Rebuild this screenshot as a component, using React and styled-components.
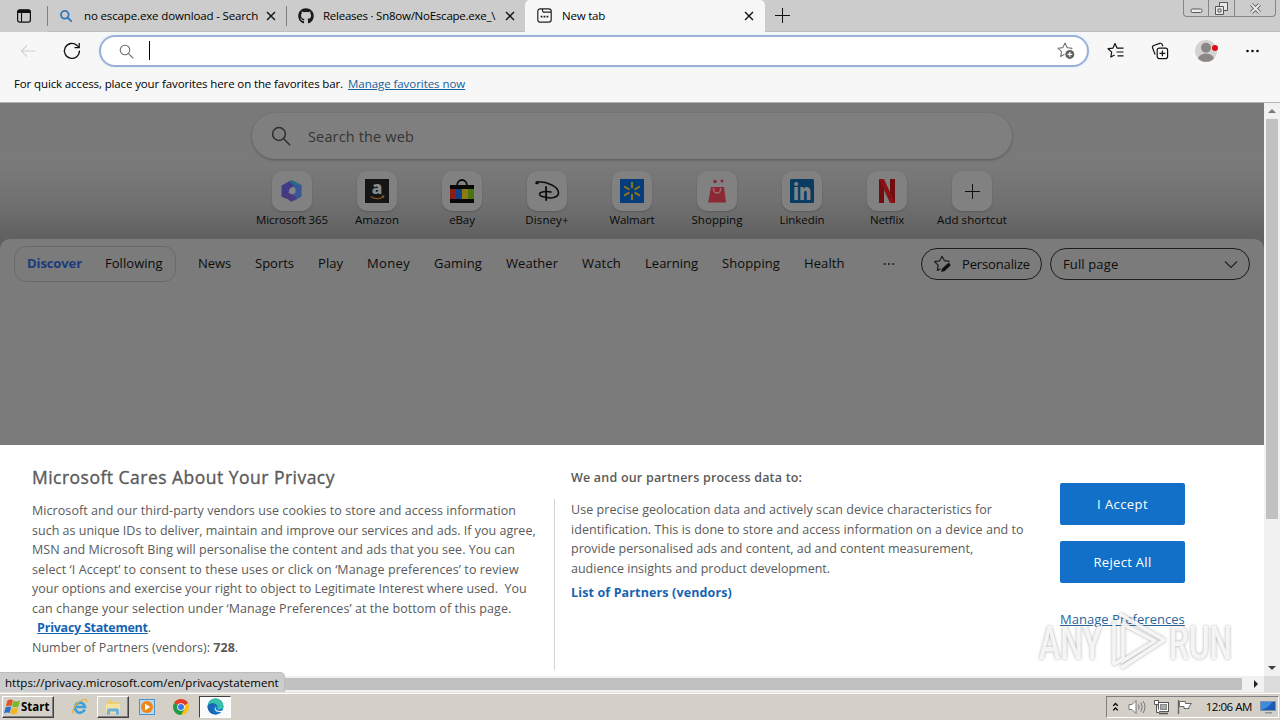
import React from "react";
import styled, { createGlobalStyle, css } from "styled-components";
import { FaGithub } from "react-icons/fa";

const GlobalStyle = createGlobalStyle`
  * {
    box-sizing: border-box;
  }

  body {
    margin: 0;
    overflow: hidden;
    font-family: "Open Sans", "Noto Sans", sans-serif;
    color: #000;
  }

  svg {
    display: block;
    flex: none;
    overflow: visible;
  }
`;

const Screen = styled.div`
  position: relative;
  width: 1280px;
  height: 720px;
  display: flex;
  flex-direction: column;
  overflow: hidden;
  background: #fff;
`;

const Text = styled.span`
  white-space: pre;
  font-size: ${(p) => p.$size || 11.5}px;
  font-weight: ${(p) => p.$weight || 400};
  letter-spacing: ${(p) => p.$track || 0}px;
`;

/* ---------- tab strip ---------- */

const TabStrip = styled.div`
  height: 32px;
  flex: none;
  display: flex;
  align-items: stretch;
  background: #ccc;
`;

const TabMenu = styled.div`
  width: 47px;
  display: flex;
  align-items: center;
  justify-content: center;
`;

const Tab = styled.div`
  width: ${(p) => p.$width}px;
  display: flex;
  align-items: center;
  padding: 0 9px 0 ${(p) => p.$left || 12}px;
  ${(p) =>
    p.$active
      ? css`
          background: #f7f7f7;
          border-radius: 5px 5px 0 0;
          padding-right: 10px;
          padding-bottom: 1px;
        `
      : css`
          border-bottom: 1px solid #bdbdbd;
        `}
`;

const TabTitle = styled(Text)`
  flex: 1;
  min-width: 0;
  overflow: hidden;
  margin-left: ${(p) => p.$left}px;
`;

const TabDivider = styled.div`
  width: 1px;
  height: 20px;
  margin-top: 6px;
  background: #808080;
`;

const NewTabButton = styled.div`
  width: 35px;
  display: flex;
  align-items: center;
  justify-content: center;
  border-bottom: 1px solid #bdbdbd;
`;

const StripRest = styled.div`
  flex: 1;
  display: flex;
  justify-content: flex-end;
  padding-right: 4px;
  border-bottom: 1px solid #bdbdbd;
`;

const WindowButtons = styled.div`
  display: flex;
  height: 17px;
  border: 1px solid #858585;
  border-top: 0;
  border-radius: 0 0 4px 4px;
`;

const WindowButton = styled.div`
  width: ${(p) => p.$width}px;
  display: flex;
  align-items: center;
  justify-content: center;

  & + & {
    border-left: 1px solid #858585;
  }
`;

/* ---------- toolbar ---------- */

const Toolbar = styled.div`
  height: 38px;
  flex: none;
  display: flex;
  align-items: center;
  padding-left: 6px;
  background: #f7f7f7;
`;

const ToolSlot = styled.div`
  width: ${(p) => p.$width || 44}px;
  display: flex;
  justify-content: center;
`;

const AddressBar = styled.div`
  width: 990px;
  height: 32px;
  margin: 0 5px;
  padding: 0 12px 0 18px;
  display: flex;
  align-items: center;
  background: #fff;
  border: 2px solid #9ab0d6;
  border-radius: 16px;
  box-shadow: 0 0 2px 1px #e4f2fb;
`;

const Caret = styled.div`
  width: 1px;
  height: 19px;
  margin: 0 auto 2px 15px;
  background: #000;
`;

const FavoritesBar = styled.div`
  height: 33px;
  flex: none;
  display: flex;
  align-items: center;
  gap: 5px;
  padding: 0 14px 6px;
  background: #f7f7f7;
  border-bottom: 1px solid #b5b5b5;
`;

const BarLink = styled(Text)`
  color: #15619c;
  text-decoration: underline;
`;

/* ---------- page ---------- */

const Viewport = styled.div`
  flex: 1;
  min-height: 0;
  display: flex;
`;

const Page = styled.div`
  width: 1264px;
  display: flex;
  flex-direction: column;
  background: #616161;
`;

const Hero = styled.div`
  height: 136px;
  padding-top: 10px;
  display: flex;
  flex-direction: column;
  align-items: center;
  background: linear-gradient(#797979 0, #7a7a7a 45%, #707070 74%, #606060 100%);
`;

const WebSearch = styled.div`
  width: 760px;
  height: 46px;
  display: flex;
  align-items: center;
  gap: 17px;
  padding-left: 19px;
  border-radius: 23px;
  background: #7f7f7f;
  box-shadow: 0 1px 3px rgba(0, 0, 0, 0.28);
  color: #343434;
`;

const Shortcuts = styled.div`
  display: flex;
  margin-top: 12px;
`;

const Shortcut = styled.div`
  width: 85px;
  display: flex;
  flex-direction: column;
  align-items: center;
  line-height: 17px;
  color: #080808;
`;

const Tile = styled.div`
  width: 40px;
  height: 40px;
  display: flex;
  align-items: center;
  justify-content: center;
  border-radius: 10px;
  background: #818181;
  box-shadow: 0 1px 2px rgba(0, 0, 0, 0.18);
`;

const Feed = styled.div`
  flex: 1;
  padding: 7px 14px 0;
  border-radius: 10px 10px 0 0;
  background: #7b7b7b;
`;

const FeedNav = styled.div`
  display: flex;
  align-items: center;
  height: 36px;
  color: #0c0c0c;
`;

const FeedSwitch = styled.div`
  width: 162px;
  height: 36px;
  display: flex;
  align-items: center;
  gap: 23px;
  padding: 0 0 2px 12px;
  border: 1px solid #696969;
  border-radius: 12px;
`;

const Current = styled(Text)`
  color: #1a3a7c;
`;

const Topics = styled.div`
  display: flex;
  gap: 24px;
  margin-left: 22px;
  padding-bottom: 2px;
`;

const MoreTopics = styled.div`
  margin-left: auto;
  margin-right: 26px;
`;

const PillButton = styled.div`
  width: ${(p) => p.$width}px;
  height: 32px;
  display: flex;
  align-items: center;
  justify-content: space-between;
  padding: 0 11px 0 ${(p) => p.$left || 12}px;
  border: 1px solid #1c1c1c;
  border-radius: 16px;

  & + & {
    margin-left: 8px;
  }
`;

/* ---------- consent banner ---------- */

const Banner = styled.div`
  height: 231px;
  flex: none;
  display: flex;
  background: #fff;
  color: #5a5a5a;
`;

const Notice = styled.div`
  width: 554px;
  padding: 19px 0 0 32px;
`;

const NoticeTitle = styled(Text)`
  display: block;
  line-height: 26px;
  margin-bottom: 11px;
  -webkit-text-stroke: 0.35px currentColor;
`;

const Line = styled(Text)`
  display: block;
  line-height: 19.5px;
`;

const StrongLink = styled(Text)`
  margin-left: ${(p) => p.$left || 0}px;
  color: #1464b4;
  text-decoration: ${(p) => (p.$plain ? "none" : "underline")};
`;

const Purposes = styled.div`
  width: 488px;
  margin-top: 54px;
  padding-left: 16px;
  border-left: 1px solid #d4d4d4;
  height: 171px;
`;

const PurposeBlock = styled.div`
  margin-top: -32px;
`;

const PurposeTitle = styled(Text)`
  display: block;
  line-height: 21px;
  margin-bottom: 12px;
`;

const PartnerList = styled.div`
  margin-top: 3px;
  line-height: 20px;
`;

const Actions = styled.div`
  width: 125px;
  margin: 38px 0 0 18px;
  display: flex;
  flex-direction: column;
  gap: 16px;
`;

const ActionButton = styled.div`
  height: 42px;
  display: flex;
  align-items: center;
  justify-content: center;
  border-radius: 2px;
  background: #1270c8;
  color: #fff;
`;

const ManageLink = styled(Text)`
  margin-top: 10px;
  line-height: 20px;
  color: #2a649c;
  text-decoration: underline;
`;

/* ---------- scrollbars ---------- */

const VScroll = styled.div`
  width: 16px;
  display: flex;
  flex-direction: column;
  align-items: center;
  justify-content: space-between;
  background: #f1f1f1;
`;

const VThumb = styled.div`
  width: 12px;
  height: 400px;
  margin-bottom: auto;
  background: #c1c1c1;
`;

const ArrowBox = styled.div`
  width: 16px;
  height: 16px;
  display: flex;
  align-items: center;
  justify-content: center;
`;

const HScroll = styled.div`
  height: 16px;
  flex: none;
  display: flex;
  align-items: center;
  background: #f1f1f1;
`;

const HThumb = styled.div`
  width: 1226px;
  height: 12px;
  margin: 0 6px 0 16px;
  background: #c1c1c1;
`;

const ScrollCorner = styled.div`
  width: 16px;
  height: 16px;
  background: #dcdcdc;
`;

/* ---------- taskbar ---------- */

const Taskbar = styled.div`
  height: 28px;
  flex: none;
  display: flex;
  align-items: center;
  padding: 1px 1px 1px 2px;
  background: #d4d0c8;
  border-top: 1px solid #e6e3dc;
  box-shadow: inset 0 1px 0 #fff;
`;

const StartButton = styled.div`
  width: 52px;
  height: 22px;
  display: flex;
  align-items: center;
  padding-left: 1px;
  border: 1px solid;
  border-color: #fff #404040 #404040 #fff;
  box-shadow: inset -1px -1px 0 #808080;
`;

const TaskButton = styled.div`
  width: 32px;
  height: 22px;
  margin-left: ${(p) => p.$left || 0}px;
  display: flex;
  align-items: center;
  justify-content: center;
  ${(p) =>
    p.$state === "raised" &&
    css`
      border: 1px solid;
      border-color: #fff #404040 #404040 #fff;
      box-shadow: inset -1px -1px 0 #808080;
    `}
  ${(p) =>
    p.$state === "pressed" &&
    css`
      border: 1px solid;
      border-color: #404040 #fff #fff #404040;
      background: #fbfafa;
    `}
`;

const Tray = styled.div`
  width: 173px;
  height: 22px;
  margin-left: auto;
  display: flex;
  align-items: center;
  padding: 0 2px 0 5px;
  border: 1px solid;
  border-color: #808080 #fff #fff #808080;
`;

const TrayIcon = styled.div`
  margin-left: ${(p) => p.$left || 0}px;
`;

const Clock = styled(Text)`
  margin-left: auto;
  margin-right: 8px;
`;

/* ---------- overlays ---------- */

const StatusBubble = styled.div`
  position: absolute;
  left: 0;
  top: 672px;
  width: 285px;
  height: 20px;
  padding-left: 5px;
  line-height: 16px;
  background: #ccc;
  border: 1px solid #bcbcbc;
  border-left: 0;
  border-bottom: 0;
  border-top-right-radius: 5px;
`;

const Watermark = styled.svg`
  position: absolute;
  left: 1030px;
  top: 602px;
  filter: drop-shadow(0 0 1.5px rgba(90, 90, 90, 0.6));
`;

/* ---------- small icons ---------- */

const CloseIcon = () => (
  <svg width="12" height="12" viewBox="0 0 12 12" stroke="#111" strokeWidth="1.4">
    <path d="M2 2l8 8M10 2l-8 8" />
  </svg>
);

const Magnifier = ({ size, color, width }) => (
  <svg
    width={size}
    height={size}
    viewBox="0 0 20 20"
    fill="none"
    stroke={color}
    strokeWidth={width}
    strokeLinecap="round"
  >
    <circle cx="8" cy="8" r="6.4" />
    <path d="M12.7 12.7l6 6" />
  </svg>
);

const TabMenuIcon = () => (
  <svg width="16" height="16" viewBox="0 0 16 16">
    <rect x="1.6" y="1.9" width="12.8" height="12.2" rx="2" fill="none" stroke="#111" strokeWidth="1.2" />
    <path d="M1.6 5V3.6a2 2 0 0 1 2-1.8h8.8a2 2 0 0 1 2 1.8V5z" fill="#111" />
    <path d="M5.5 5v9" stroke="#111" strokeWidth="1.1" />
  </svg>
);

const NewTabIcon = () => (
  <svg width="15" height="15" viewBox="0 0 15 15" fill="none" stroke="#222" strokeWidth="1.2">
    <rect x="0.8" y="0.8" width="13.4" height="13.4" rx="2.4" />
    <path d="M5.5 1v1.6a1.6 1.6 0 0 0 1.6 1.6H14" />
    <path d="M3.7 8.6h1.8M6.6 8.6h1.8M9.5 8.6h1.8" strokeWidth="1.8" />
  </svg>
);

const BackIcon = () => (
  <svg width="16" height="14" viewBox="0 0 18 16" fill="none" stroke="#cfcfcf" strokeWidth="1.2">
    <path d="M17.5 8h-16M8 1.5L1.5 8 8 14.5" />
  </svg>
);

const RefreshIcon = () => (
  <svg width="18" height="18" viewBox="0 0 18 18" fill="none" stroke="#111" strokeWidth="1.3">
    <path d="M16.4 8.6A7.5 7.5 0 1 1 14 3.4L16 5.4" />
    <path d="M16.2 1v4.7h-4.7" />
  </svg>
);

const STAR = "M8 1l2.1 4.6 5 .6-3.7 3.4 1 4.9L8 12.1l-4.4 2.4 1-4.9L.9 6.2l5-.6z";

const StarAddIcon = () => (
  <svg width="18" height="18" viewBox="0 0 18 18">
    <path d={STAR} fill="none" stroke="#777" strokeWidth="1.1" strokeLinejoin="round" />
    <circle cx="12.8" cy="12.4" r="5.4" fill="#fff" />
    <circle cx="12.8" cy="12.4" r="4.5" fill="#606060" />
    <path d="M10.4 12.4h4.8M12.8 10v4.8" stroke="#fff" strokeWidth="1.2" />
  </svg>
);

const FavoritesIcon = () => (
  <svg width="18" height="18" viewBox="0 0 18 18" fill="none" stroke="#111" strokeWidth="1.2">
    <path d="M11 6.1H10L8 1.6 6 6.1l-4.9.6 3.6 3.4-.9 4.9L7.6 13" strokeLinejoin="round" />
    <path d="M11 6.2h5.5M9.5 10h7M10.5 13.8h6" />
  </svg>
);

const CollectionsIcon = () => (
  <svg width="18" height="18" viewBox="0 0 18 18" fill="none" stroke="#111" strokeWidth="1.2">
    <rect x="6.2" y="6.2" width="10.4" height="10.4" rx="2" />
    <path d="M8.5 11.4h5.8M11.4 8.5v5.8" />
    <path d="M4.2 12.6L1.6 6a2 2 0 0 1 1.2-2.5l6-2.1a2 2 0 0 1 2.5 1.2l.6 1.6" />
  </svg>
);

const AvatarIcon = () => (
  <svg width="24" height="24" viewBox="0 0 24 24">
    <circle cx="12" cy="12" r="11" fill="#d3d3d1" />
    <circle cx="12" cy="8.8" r="5" fill="#8b8785" />
    <path d="M4 19.4c1.4-3.4 4.4-4.8 8-4.8s6.6 1.4 8 4.8a11 11 0 0 1-16 0z" fill="#8b8785" />
    <circle cx="21" cy="9" r="3" fill="#e00b1c" />
  </svg>
);

const DotsIcon = ({ width, color }) => (
  <svg width={width} height="4" viewBox="0 0 14 4" fill={color}>
    <circle cx="2" cy="2" r="1.3" />
    <circle cx="7" cy="2" r="1.3" />
    <circle cx="12" cy="2" r="1.3" />
  </svg>
);

const ArrowIcon = ({ turn = 0, color = "#404040" }) => (
  <svg width="8" height="8" viewBox="0 0 8 8">
    <path d="M0 6l4-4 4 4z" fill={color} transform={`rotate(${turn} 4 4)`} />
  </svg>
);

const PersonalizeIcon = () => (
  <svg width="18" height="18" viewBox="0 0 18 18">
    <path
      d="M15.5 7l.6-.7-4.6-.6L9 1.3 6.7 5.8l-5.2.8 3.7 3.6-.9 5.2 3.2-1.7"
      fill="none"
      stroke="#1e1e1e"
      strokeWidth="1.2"
      strokeLinejoin="round"
    />
    <path d="M8 16.8l1-3 5.6-5.2a1.7 1.7 0 0 1 2.4 2.4l-5.6 5.2z" fill="#111" />
  </svg>
);

/* ---------- shortcut logos ---------- */

const Microsoft365Logo = () => (
  <svg width="24" height="24" viewBox="0 0 24 24">
    <path d="M8 2.5L12 1l9.5 5v5L15 8 9 4z" fill="#2b6a86" />
    <path d="M9 2.5l-7.500 4v11l5 2.5 3-9.500 5-4z" fill="#413a88" />
    <path d="M21.5 6v11.5L14 22l-.5-6 2-6-3-3.5z" fill="#3a5896" />
    <path d="M1.500 15.500l5-1.500h5l5 5-5 4z" fill="#4c387c" />
    <path d="M9.8 9.5L13 8l2.500 2v3.500L12 15.500l-3.200-1.700z" fill="#858585" />
  </svg>
);

const AmazonLogo = () => (
  <svg width="24" height="24" viewBox="0 0 24 24">
    <rect width="24" height="24" fill="#151515" />
    <text x="12" y="15" textAnchor="middle" fontFamily="Open Sans" fontWeight="800" fontSize="17" fill="#8a8a8a">
      a
    </text>
    <path d="M5.5 17.5c4 2.6 9 2.6 12.5.4M16.5 16.8l2.3.2-.8 2" fill="none" stroke="#80551b" strokeWidth="1.2" />
  </svg>
);

const EbayLogo = () => (
  <svg width="24" height="24" viewBox="0 0 24 24">
    <path d="M7 7c0-8 10-8 10 0" fill="none" stroke="#080808" strokeWidth="1.8" />
    <rect y="6" width="24" height="18" fill="#080808" />
    <path d="M0 10h6v10H0z" fill="#8a1e16" />
    <path d="M6 10h6v10H6z" fill="#123f87" />
    <path d="M12 10h6v10h-6z" fill="#8d7a10" />
    <path d="M18 10h6v10h-6z" fill="#4b7410" />
  </svg>
);

const DisneyLogo = () => (
  <svg width="26" height="24" viewBox="0 0 26 24" fill="none" stroke="#0c0c0c" strokeWidth="1.6" strokeLinecap="round">
    <path d="M4 4.500C1 4.500 1.500 2.800 4.500 2.800c9 0 20 4.700 20 11 0 4.400-6.500 6.200-12.300 4.400" />
    <path d="M12 8l.2 13" strokeWidth="1.8" />
    <path d="M17 13c-4.500-1-11.500-.4-11.500 2.100 0 1.700 3 2.900 6.500 3.100" />
  </svg>
);

const WalmartLogo = () => (
  <svg width="24" height="24" viewBox="0 0 24 24">
    <rect width="24" height="24" fill="#053c7c" />
    <g stroke="#8b7318" strokeWidth="2.1" strokeLinecap="round">
      {[0, 60, 120, 180, 240, 300].map((a) => (
        <path key={a} d="M12 3.8v4.4" transform={`rotate(${a} 12 12)`} />
      ))}
    </g>
  </svg>
);

const ShoppingLogo = () => (
  <svg width="20" height="24" viewBox="0 0 20 24">
    <path d="M4 8h13l2 15.500H1.200z" fill="#8c2834" />
    <path d="M6.500 9v1.500a3.500 3.500 0 0 0 7 0V9" fill="none" stroke="#9a7478" strokeWidth="1.3" />
    <circle cx="8" cy="2.5" r="1.8" fill="#8c2834" />
    <circle cx="15" cy="2" r="1.5" fill="#8c2834" />
  </svg>
);

const LinkedinLogo = () => (
  <svg width="24" height="24" viewBox="0 0 24 24">
    <rect width="24" height="24" rx="1.5" fill="#0a3c62" />
    <text
      x="3"
      y="20.5"
      textLength="18.5"
      lengthAdjust="spacingAndGlyphs"
      fontFamily="Open Sans"
      fontWeight="800"
      fontSize="22"
      fill="#838383"
    >
      in
    </text>
  </svg>
);

const NetflixLogo = () => (
  <svg width="18" height="24" viewBox="0 0 18 24">
    <path d="M1 0h5v24H1zM12 0h5v24h-5z" fill="#6f0d10" />
    <path d="M1 0h5l11 24h-5z" fill="#8a1216" />
  </svg>
);

const PlusIcon = () => (
  <svg width="15" height="15" viewBox="0 0 15 15" stroke="#111" strokeWidth="1">
    <path d="M7.5 0v15M0 7.5h15" />
  </svg>
);

/* ---------- taskbar icons ---------- */

const WindowsFlag = () => (
  <svg width="17" height="16" viewBox="0 0 17 16">
    <path d="M3.5 1.5c2-1.400 4-1.200 5.400-.3L7.500 7.200C6 6.300 4 6.200 1.800 7.400z" fill="#e2541f" />
    <path d="M9.5 1.7c1.800 1 4 1 6.500-.2l-1.600 6c-2 1.200-4.500 1-6.300.1z" fill="#7cb629" />
    <path d="M1.5 8.4c2-1.300 4.300-1.100 5.700-.3l-1.500 6c-1.500-.9-3.500-1-5.700.3z" fill="#2d72c8" />
    <path d="M7.8 8.6c1.800 1 4 1 6.400-.1l-1.600 6c-2.100 1.200-4.500 1-6.300 0z" fill="#f2b51c" />
  </svg>
);

const ExplorerEIcon = () => (
  <svg width="18" height="18" viewBox="0 0 18 18" fill="none">
    <path d="M13.7 11.5A5 5 0 1 1 14 9H5.5" stroke="#3d9fdc" strokeWidth="2.6" />
    <path d="M2.6 15.8C-.5 13 6 4 12 1.8c3-1.1 4.400 0 3.600 2.600" stroke="#e5b533" strokeWidth="1.2" />
  </svg>
);

const FolderIcon = () => (
  <svg width="18" height="18" viewBox="0 0 18 18">
    <path d="M3 2h5l1 2h6v9H3z" fill="#e9cf72" />
    <path d="M2 6h14v9H2z" fill="#f4e3a0" />
    <path d="M3 16.5v-4a2 2 0 0 1 2-2h8a2 2 0 0 1 2 2v4h-3v-3H6v3z" fill="#6ab2dc" />
  </svg>
);

const MediaIcon = () => (
  <svg width="16" height="16" viewBox="0 0 16 16">
    <rect x="0.5" y="0.5" width="15" height="15" fill="#b9d9f0" stroke="#4d93c9" />
    <circle cx="8" cy="8" r="6" fill="#f08518" />
    <path d="M6 4.8v6.4L11.3 8z" fill="#fff" />
  </svg>
);

const ChromeIcon = () => (
  <svg width="16" height="16" viewBox="0 0 16 16">
    <circle cx="8" cy="8" r="8" fill="#fbc116" />
    <path d="M8 8L1.1 4A8 8 0 0 1 14.9 4z" fill="#e33b2e" />
    <path d="M8 8L1.1 4A8 8 0 0 0 8 16l3.500-6z" fill="#229a4b" />
    <path d="M8 4h6.9L8 8z" fill="#e33b2e" />
    <circle cx="8" cy="8" r="3.8" fill="#fff" />
    <circle cx="8" cy="8" r="3" fill="#3b78e7" />
  </svg>
);

const EdgeIcon = () => (
  <svg width="17" height="17" viewBox="0 0 17 17">
    <circle cx="8.5" cy="8.5" r="8" fill="#1577c9" />
    <path d="M.6 7.5A8 8 0 0 1 16.5 8c0 2.500-2 3.500-4.500 3.500-2 0-2-1-1.500-2C11.500 6 4 3.500.6 7.500z" fill="#36c2a8" />
    <path d="M.5 8.5C2 4 9 4.500 10.500 8 9 7 6.500 7.500 6 10c-.5 3 2 5.500 5 6A8 8 0 0 1 .5 8.500z" fill="#1b65b5" />
    <path d="M9 8.5c-1.300 1.500 0 4.500 3.500 4.500 1.500 0 2.500-.4 3.500-1 0-.3.400-1 .8-1.500l.2 4-4.500-.5C8 14 6.500 10.500 9 8.500z" fill="#fbfafa" />
  </svg>
);

const ChevronsIcon = () => (
  <svg width="7" height="10" viewBox="0 0 7 10" fill="none" stroke="#000" strokeWidth="1.3">
    <path d="M1.2 3.9l2.3-2.4 2.3 2.4M1.2 8.4L3.500 6l2.300 2.400" />
  </svg>
);

const SpeakerIcon = () => (
  <svg width="18" height="16" viewBox="0 0 18 16" fill="none" stroke="#777" strokeWidth="1">
    <path d="M1 5.5h3l4-4v13l-4-4H1z" fill="#fff" />
    <path d="M10.5 5.5q1.500 2.500 0 5M12.800 3.500q3 4.500 0 9M15 2q4 6 0 12" />
  </svg>
);

const NetworkIcon = () => (
  <svg width="17" height="16" viewBox="0 0 17 16" fill="#fff" stroke="#555">
    <rect x="5.5" y="3.5" width="10" height="9" />
    <rect x="7.5" y="5.5" width="6" height="5" fill="#a9a9a9" stroke="#888" />
    <path d="M6 14.5h9" strokeWidth="1.6" />
    <path d="M1.5 1.5h4v4h-4zM3.5 5.5v8h3" />
  </svg>
);

const FlagIcon = () => (
  <svg width="16" height="16" viewBox="0 0 16 16" fill="#fff" stroke="#666">
    <path d="M1.5 1v14" strokeWidth="1.4" />
    <path d="M2.5 2.5h6v2h6l-2.5 3v2H7v-2H2.5z" />
  </svg>
);

const DesktopIcon = () => (
  <svg width="16" height="14" viewBox="0 0 16 14">
    <path d="M.5 1.5h15v9H.5z" fill="#1b5bb5" stroke="#7d93ab" />
    <path d="M1 10c4-1 9-4 11-8H1z" fill="#3f8be0" />
    <path d="M5 12h7v1.5H5z" fill="#8796a6" />
  </svg>
);

const SHORTCUTS = [
  { name: "Microsoft 365", track: -0.11, Logo: Microsoft365Logo },
  { name: "Amazon", track: 0.08, Logo: AmazonLogo },
  { name: "eBay", track: -0.1, Logo: EbayLogo },
  { name: "Disney+", track: 0.1, Logo: DisneyLogo },
  { name: "Walmart", track: -0.1, Logo: WalmartLogo },
  { name: "Shopping", track: 0.06, Logo: ShoppingLogo },
  { name: "Linkedin", track: -0.05, Logo: LinkedinLogo },
  { name: "Netflix", track: -0.1, Logo: NetflixLogo },
  { name: "Add shortcut", track: 0.05, Logo: PlusIcon },
];

const TOPICS = [
  { name: "News", track: -0.09 },
  { name: "Sports", track: 0 },
  { name: "Play", track: 0.04 },
  { name: "Money", track: 0.337 },
  { name: "Gaming", track: 0.16 },
  { name: "Weather", track: 0.036 },
  { name: "Watch", track: 0.188 },
  { name: "Learning", track: 0.01 },
  { name: "Shopping", track: 0.105 },
  { name: "Health", track: 0.1 },
];

const NOTICE = [
  ["Microsoft and our third-party vendors use cookies to store and access information", 0.068],
  ["such as unique IDs to deliver, maintain and improve our services and ads. If you agree,", 0.008],
  ["MSN and Microsoft Bing will personalise the content and ads that you see. You can", 0.036],
  ["select ‘I Accept’ to consent to these uses or click on ‘Manage preferences’ to review", 0.1],
  ["your options and exercise your right to object to Legitimate Interest where used.  You", -0.016],
  ["can change your selection under ‘Manage Preferences’ at the bottom of this page.", 0.066],
];

const PURPOSES = [
  ["Use precise geolocation data and actively scan device characteristics for", 0.058],
  ["identification. This is done to store and access information on a device and to", 0.048],
  ["provide personalised ads and content, ad and content measurement,", -0.01],
  ["audience insights and product development.", -0.01],
];

const BrowserTabs = () => (
  <TabStrip>
    <TabMenu>
      <TabMenuIcon />
    </TabMenu>
    <TabDivider />
    <Tab $width={238}>
      <Magnifier size={12} color="#2f76b8" width={3} />
      <TabTitle $left={12} $track={-0.14}>
        no escape.exe download - Search
      </TabTitle>
      <CloseIcon />
    </Tab>
    <TabDivider />
    <Tab $width={238} $left={10.5}>
      <FaGithub size={16} color="#1b1b1b" />
      <TabTitle $left={9.5} $track={-0.24}>
        Releases · Sn8ow/NoEscape.exe_\
      </TabTitle>
      <CloseIcon />
    </Tab>
    <Tab $width={240} $active>
      <NewTabIcon />
      <TabTitle $left={10} $track={-0.2}>
        New tab
      </TabTitle>
      <CloseIcon />
    </Tab>
    <NewTabButton>
      <PlusIcon />
    </NewTabButton>
    <StripRest>
      <WindowButtons>
        <WindowButton $width={24}>
          <svg width="13" height="17" viewBox="0 0 13 17">
            <rect x="1" y="9" width="11" height="3.5" rx="1.5" fill="#eee" stroke="#555" />
          </svg>
        </WindowButton>
        <WindowButton $width={26}>
          <svg width="13" height="13" viewBox="0 0 13 13" fill="#e8e8e8" stroke="#555">
            <path d="M4.5.5h8v8h-8z" />
            <path d="M.5 4.5h8v8h-8z" />
            <path d="M3 7h3v3H3z" />
          </svg>
        </WindowButton>
        <WindowButton $width={41}>
          <svg width="13" height="11" viewBox="0 0 13 11">
            <path d="M2.5 1.5l8 8M10.5 1.5l-8 8" stroke="#555" strokeWidth="3.8" />
            <path d="M2.5 1.5l8 8M10.5 1.5l-8 8" stroke="#eee" strokeWidth="1.9" />
          </svg>
        </WindowButton>
      </WindowButtons>
    </StripRest>
  </TabStrip>
);

const ConsentBanner = () => (
  <Banner>
    <Notice>
      <NoticeTitle $size={17.5} $track={0.48}>
        Microsoft Cares About Your Privacy
      </NoticeTitle>
      {NOTICE.map(([line, track]) => (
        <Line key={line} $size={12.5} $track={track}>
          {line}
        </Line>
      ))}
      <Line $size={12.5} $track={-0.163}>
        {" "}
        <StrongLink $left={2} $size={12.5} $weight={700} $track={-0.24}>
          Privacy Statement
        </StrongLink>
        .
      </Line>
      <Line $size={12.5} $track={0.02}>
        {"Number of Partners (vendors): "}
        <b>728</b>.
      </Line>
    </Notice>
    <Purposes>
      <PurposeBlock>
        <PurposeTitle $size={12.5} $weight={600} $track={0.2}>
          We and our partners process data to:
        </PurposeTitle>
        {PURPOSES.map(([line, track]) => (
          <Line key={line} $size={12.5} $track={track}>
            {line}
          </Line>
        ))}
        <PartnerList>
          <StrongLink $plain $size={12.5} $weight={700} $track={0.13}>
            List of Partners (vendors)
          </StrongLink>
        </PartnerList>
      </PurposeBlock>
    </Purposes>
    <Actions>
      <ActionButton>
        <Text $size={13} $track={0.42}>
          I Accept
        </Text>
      </ActionButton>
      <ActionButton>
        <Text $size={13} $track={0.3}>
          Reject All
        </Text>
      </ActionButton>
      <ManageLink $size={13} $track={0.03}>
        Manage Preferences
      </ManageLink>
    </Actions>
  </Banner>
);

const WindowsTaskbar = () => (
  <Taskbar>
    <StartButton>
      <WindowsFlag />
      <Text $size={11.5} $weight={700}>
        Start
      </Text>
    </StartButton>
    <TaskButton $left={10}>
      <ExplorerEIcon />
    </TaskButton>
    <TaskButton $left={1} $state="raised">
      <FolderIcon />
    </TaskButton>
    <TaskButton $left={2}>
      <MediaIcon />
    </TaskButton>
    <TaskButton $left={2}>
      <ChromeIcon />
    </TaskButton>
    <TaskButton $left={2} $state="pressed">
      <EdgeIcon />
    </TaskButton>
    <Tray>
      <ChevronsIcon />
      <TrayIcon $left={9}>
        <SpeakerIcon />
      </TrayIcon>
      <TrayIcon $left={7}>
        <NetworkIcon />
      </TrayIcon>
      <TrayIcon $left={7}>
        <FlagIcon />
      </TrayIcon>
      <Clock $track={-0.45}>12:06 AM</Clock>
      <DesktopIcon />
    </Tray>
  </Taskbar>
);

const App = () => (
  <Screen>
    <GlobalStyle />
    <BrowserTabs />
    <Toolbar>
      <ToolSlot>
        <BackIcon />
      </ToolSlot>
      <ToolSlot>
        <RefreshIcon />
      </ToolSlot>
      <AddressBar>
        <Magnifier size={15} color="#6b6b6b" width={1.4} />
        <Caret />
        <StarAddIcon />
      </AddressBar>
      <ToolSlot>
        <FavoritesIcon />
      </ToolSlot>
      <ToolSlot>
        <CollectionsIcon />
      </ToolSlot>
      <ToolSlot $width={48}>
        <AvatarIcon />
      </ToolSlot>
      <ToolSlot>
        <DotsIcon width={15} color="#111" />
      </ToolSlot>
    </Toolbar>
    <FavoritesBar>
      <Text $track={-0.123}>
        For quick access, place your favorites here on the favorites bar.
      </Text>
      <BarLink $track={-0.06}>Manage favorites now</BarLink>
    </FavoritesBar>
    <Viewport>
      <Page>
        <Hero>
          <WebSearch>
            <Magnifier size={20} color="#2e2e2e" width={1.5} />
            <Text $size={14.5} $track={0.15}>
              Search the web
            </Text>
          </WebSearch>
          <Shortcuts>
            {SHORTCUTS.map(({ name, track, Logo }) => (
              <Shortcut key={name}>
                <Tile>
                  <Logo />
                </Tile>
                <Text $track={track}>{name}</Text>
              </Shortcut>
            ))}
          </Shortcuts>
        </Hero>
        <Feed>
          <FeedNav>
            <FeedSwitch>
              <Current $size={13} $weight={700} $track={-0.1}>
                Discover
              </Current>
              <Text $size={13} $track={0.05}>
                Following
              </Text>
            </FeedSwitch>
            <Topics>
              {TOPICS.map(({ name, track }) => (
                <Text key={name} $size={13} $track={track}>
                  {name}
                </Text>
              ))}
            </Topics>
            <MoreTopics>
              <DotsIcon width={12} color="#222" />
            </MoreTopics>
            <PillButton $width={121} $left={11}>
              <PersonalizeIcon />
              <Text $size={13} $track={-0.15}>
                Personalize
              </Text>
            </PillButton>
            <PillButton $width={200}>
              <Text $size={13} $track={0.13}>
                Full page
              </Text>
              <svg width="14" height="9" viewBox="0 0 14 9" fill="none" stroke="#222" strokeWidth="1.2">
                <path d="M1 1.5l6 6 6-6" />
              </svg>
            </PillButton>
          </FeedNav>
        </Feed>
        <ConsentBanner />
      </Page>
      <VScroll>
        <ArrowBox>
          <ArrowIcon color="#7a7a7a" />
        </ArrowBox>
        <VThumb />
        <ArrowBox>
          <ArrowIcon turn={180} />
        </ArrowBox>
      </VScroll>
    </Viewport>
    <HScroll>
      <HThumb />
      <ArrowBox>
        <ArrowIcon turn={90} color="#222" />
      </ArrowBox>
      <ScrollCorner />
    </HScroll>
    <WindowsTaskbar />
    <StatusBubble>
      <Text $track={0.03}>https://privacy.microsoft.com/en/privacystatement</Text>
    </StatusBubble>
    <Watermark width="210" height="76" viewBox="0 0 210 76">
      <g fontFamily="Roboto" fontWeight="500" fontSize="46" fill="#fff" fillOpacity="0.85">
        <text x="9" y="57" textLength="63" lengthAdjust="spacingAndGlyphs">
          ANY
        </text>
        <text x="139" y="57" textLength="63" lengthAdjust="spacingAndGlyphs">
          RUN
        </text>
      </g>
      <g fill="none" stroke="#fff" strokeOpacity="0.85" strokeWidth="3.5" strokeLinejoin="round">
        <path d="M84 18v44l9-5V22l32 17-34 21" />
        <path d="M90 12l44 26-43 28" />
      </g>
    </Watermark>
  </Screen>
);

export default App;
